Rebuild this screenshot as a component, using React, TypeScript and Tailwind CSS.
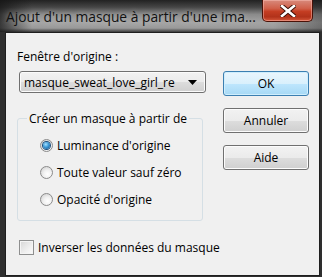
import React from "react";

const font = { fontFamily: '"Open Sans", "Noto Sans", sans-serif' };

function Radio({ checked, label }: { checked?: boolean; label: string }) {
  return (
    <div className="flex h-[27px] items-center">
      <span className="flex h-[13px] w-[13px] shrink-0 items-center justify-center rounded-full border border-[#8b8b8b] bg-[radial-gradient(circle_at_60%_65%,#ffffff_0%,#f1f1f1_40%,#c9c9c9_100%)]">
        {checked && (
          <span className="h-[7px] w-[7px] rounded-full bg-[radial-gradient(circle_at_40%_35%,#a6e1ff_0%,#3a98d6_45%,#0d4a86_100%)] shadow-[0_0_0_1px_#1d4e7c]" />
        )}
      </span>
      <span className="ml-[4px] whitespace-nowrap text-[12px] leading-[15px] text-black">{label}</span>
    </div>
  );
}

function Btn({ label, primary }: { label: string; primary?: boolean }) {
  return (
    <div
      className={
        primary
          ? "flex h-[25px] w-[86px] items-center justify-center rounded-[3px] border border-[#3c7fb1] bg-[linear-gradient(to_bottom,#eaf6fd_0%,#d9f0fc_50%,#bee6fd_51%,#a7d9f5_100%)] shadow-[inset_0_0_0_1px_#cfeefd] text-[12px] text-black"
          : "flex h-[25px] w-[86px] items-center justify-center rounded-[3px] border border-[#707070] bg-[linear-gradient(to_bottom,#f2f2f2_0%,#ebebeb_50%,#dddddd_51%,#cfcfcf_100%)] shadow-[inset_0_0_0_1px_#fcfcfc] text-[12px] text-black"
      }
    >
      {label}
    </div>
  );
}

export default function App() {
  return (
    <div
      className="flex h-[277px] w-[322px] flex-col overflow-hidden bg-[#2e2e2e]"
      style={font}
    >
      {/* title bar */}
      <div className="flex h-[32px] shrink-0 items-start justify-between bg-[linear-gradient(to_right,rgba(20,20,20,0.75)_0%,rgba(20,20,20,0)_10%,rgba(20,20,20,0)_85%,rgba(20,20,20,0.35)_100%),linear-gradient(to_bottom,#222222_0%,#454545_22%,#8a8a8a_45%,#a4a4a4_70%,#9a9a9a_88%,#3a3a3a_100%)]">
        <span className="ml-[6px] mt-[8px] whitespace-nowrap text-[13.8px] leading-[18px] text-[#111] [text-shadow:0_0_6px_rgba(255,255,255,0.35)]">
          Ajout d'un masque à partir d'une ima...
        </span>
        <div className="mr-[9px] flex h-[22px] w-[51px] shrink-0 items-center justify-center rounded-b-[5px] border border-t-0 border-[#4a1208] bg-[linear-gradient(to_bottom,#d88a7c_0%,#d0604a_40%,#c43d22_55%,#b1321a_80%,#d6583b_100%)] shadow-[inset_0_0_0_1px_rgba(255,200,190,0.45)]">
          <svg width="16" height="12" viewBox="0 0 16 12">
            <path
              d="M2 1 L14 11 M14 1 L2 11"
              stroke="#3a0d05"
              strokeWidth="4.5"
              strokeLinecap="square"
            />
            <path
              d="M2 1 L14 11 M14 1 L2 11"
              stroke="#ffffff"
              strokeWidth="2.6"
              strokeLinecap="square"
            />
          </svg>
        </div>
      </div>

      {/* client area */}
      <div className="ml-[5px] mr-[2px] mb-[1px] flex flex-1 border border-[#1e1e1e] bg-[#f0f0f0] text-black">
        <div className="flex w-[205px] shrink-0 flex-col pl-[11px] pt-[16px]">
          <div className="whitespace-nowrap text-[12px] leading-[15px]">Fenêtre d'origine :</div>
          <div className="ml-[2px] mt-[7px] flex h-[22px] w-[187px] items-center justify-between rounded-[3px] border border-[#707070] bg-[linear-gradient(to_bottom,#f2f2f2_0%,#ebebeb_50%,#dddddd_51%,#cfcfcf_100%)] pl-[4px] pr-[8px] shadow-[inset_0_0_0_1px_#fbfbfb]">
            <span className="whitespace-nowrap text-[12px] leading-[15px]">masque_sweat_love_girl_re</span>
            <svg width="9" height="5" viewBox="0 0 9 5">
              <path d="M0 0 H9 L4.5 5 Z" fill="#000" />
            </svg>
          </div>

          <fieldset className="mt-[18px] w-[186px] rounded-[3px] border border-[#d5dfe5] pb-[7px] pl-[22px]">
            <legend className="-ml-[13px] whitespace-nowrap px-[2px] text-[12px] leading-[15px]">
              Créer un masque à partir de
            </legend>
            <div className="mt-[6px]">
              <Radio checked label="Luminance d'origine" />
              <Radio label="Toute valeur sauf zéro" />
              <Radio label="Opacité d'origine" />
            </div>
          </fieldset>

          <div className="ml-[2px] mt-[19px] flex items-center">
            <span className="h-[15px] w-[15px] shrink-0 border border-[#8e8f8f] bg-[linear-gradient(135deg,#d6d6d6_0%,#efefef_60%,#fbfbfb_100%)] shadow-[inset_0_0_0_1px_#f4f4f4]" />
            <span className="ml-[4px] whitespace-nowrap text-[12px] leading-[15px]">Inverser les données du masque</span>
          </div>
        </div>

        <div className="ml-[12px] flex flex-col gap-[12px] pt-[38px]">
          <Btn primary label="OK" />
          <Btn label="Annuler" />
          <Btn label="Aide" />
        </div>
      </div>
    </div>
  );
}
